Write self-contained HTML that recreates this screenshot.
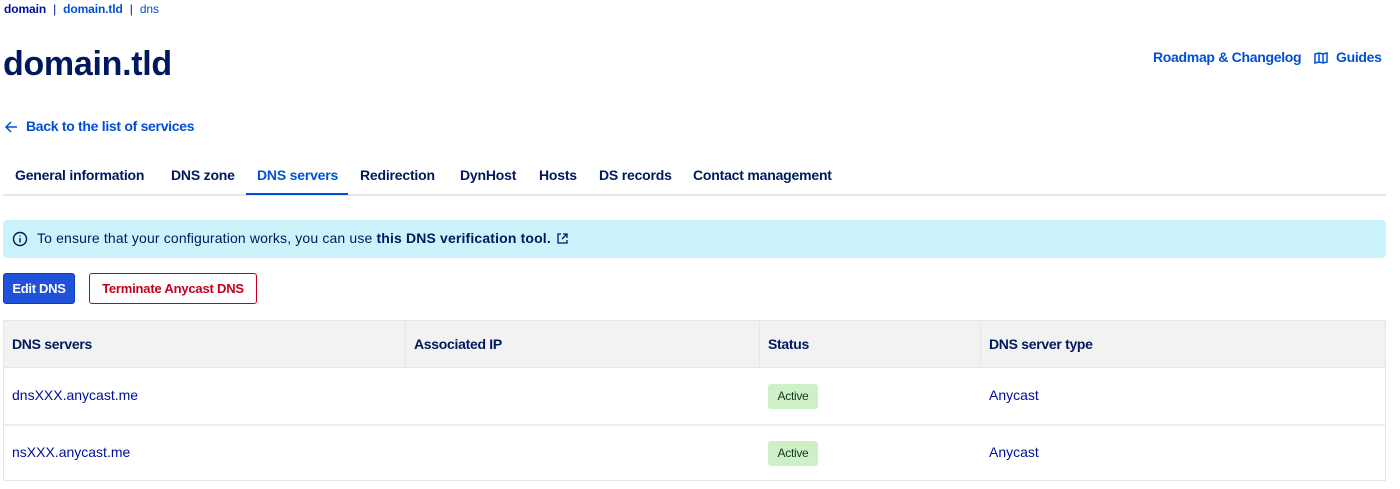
<!DOCTYPE html>
<html><head><meta charset="utf-8"><style>
*{margin:0;padding:0;box-sizing:border-box}
body{width:1400px;height:489px;background:#fff;font-family:"Liberation Sans",sans-serif;color:#000e9c;position:relative;overflow:hidden}
.a{position:absolute;white-space:nowrap}
.bc{top:2px;left:4px;font-size:12px;color:#0050d7;font-weight:bold;letter-spacing:-0.1px}
.bc span{color:#000e9c;font-weight:normal;margin:0 7px}
h1{position:absolute;left:3px;top:45px;font-size:34px;font-weight:bold;color:#00185e;letter-spacing:-0.3px}
.lk{color:#0050d7;font-weight:bold;font-size:14px;letter-spacing:-0.3px}
.tabs{position:absolute;left:3px;top:160px;width:1383px;height:36px;border-bottom:2px solid #e6e6e6}
.tab{position:absolute;top:7px;font-size:14px;font-weight:bold;color:#00185e;letter-spacing:-0.2px}
.info{position:absolute;left:3px;top:220px;width:1383px;height:38px;background:#ccf3fb;border-radius:4px;font-size:14px;color:#00185e;letter-spacing:0.15px}
.btn1{position:absolute;left:3px;top:273px;width:72px;height:31px;background:#1f52d8;border:1px solid #0a3fc4;border-radius:3px;color:#fff;font-weight:bold;font-size:13px;line-height:29px;text-align:center;letter-spacing:-0.3px}
.btn2{position:absolute;left:89px;top:273px;width:168px;height:31px;border:1px solid #c4001f;border-radius:3px;color:#c4001f;font-weight:bold;font-size:13px;line-height:29px;text-align:center;letter-spacing:-0.2px}
.tbl{position:absolute;left:3px;top:320px;width:1383px;height:161px;border:1px solid #e6e6e6}
.hd{position:absolute;left:0;top:0;width:100%;height:47px;background:#f2f2f2;border-bottom:1px solid #e6e6e6}
.vl{position:absolute;top:0;height:47px;width:1px;background:#e6e6e6}
.th{position:absolute;top:15px;font-size:14px;font-weight:bold;color:#00185e;letter-spacing:-0.3px}
.td{position:absolute;font-size:14px;color:#000e9c;letter-spacing:0}
.rl{position:absolute;left:0;width:100%;height:2px;background:#eee}
.badge{position:absolute;left:764px;width:50px;height:25px;background:#cdf0c6;border-radius:3px;font-size:12px;color:#0d3a1c;text-align:center;line-height:25px;letter-spacing:-0.3px}
</style></head><body>
<div class="a bc"><b style="color:#000e9c">domain</b><span>|</span>domain.tld<span>|</span><b style="font-weight:normal;color:#0050d7">dns</b></div>
<h1>domain.tld</h1>
<div class="a lk" style="left:1153px;top:49px">Roadmap &amp; Changelog</div>
<svg class="a" style="left:1314px;top:52px" width="14" height="12" viewBox="0 0 14 12" fill="none" stroke="#0050d7" stroke-width="1.5"><path d="M1 2l4-1 4 1 4-1v9l-4 1-4-1-4 1z M5 1v9 M9 2v9"/></svg>
<div class="a lk" style="left:1336px;top:49px">Guides</div>
<svg class="a" style="left:4px;top:120px" width="14" height="14" viewBox="0 0 14 14" fill="none" stroke="#0050d7" stroke-width="1.5"><path d="M13 7H2M7 2L2 7l5 5"/></svg>
<div class="a lk" style="left:26px;top:118px">Back to the list of services</div>
<div class="tabs">
<div class="tab" style="left:12px">General information</div>
<div class="tab" style="left:168px">DNS zone</div>
<div class="tab" style="left:254px;color:#0050d7">DNS servers</div>
<div style="position:absolute;left:243px;top:33px;width:102px;height:2px;background:#0050d7"></div>
<div class="tab" style="left:357px">Redirection</div>
<div class="tab" style="left:457px">DynHost</div>
<div class="tab" style="left:536px">Hosts</div>
<div class="tab" style="left:596px">DS records</div>
<div class="tab" style="left:690px">Contact management</div>
</div>
<div class="info">
<svg class="a" style="left:9px;top:11px" width="16" height="16" viewBox="0 0 16 16" fill="none" stroke="#00185e" stroke-width="1.4"><circle cx="8" cy="8" r="6.5"/><path d="M8 7v4.5M8 4.5v1"/></svg>
<div class="a" style="left:34px;top:10px">To ensure that your configuration works, you can use <b>this DNS verification tool.</b></div>
<svg class="a" style="left:553px;top:12px" width="13" height="13" viewBox="0 0 13 13" fill="none" stroke="#00185e" stroke-width="1.3"><path d="M5 2H2v9h9V8M7 2h4v4M11 2L6 7"/></svg>
</div>
<div class="btn1">Edit DNS</div>
<div class="btn2">Terminate Anycast DNS</div>
<div class="tbl">
<div class="hd"></div>
<div class="vl" style="left:401px"></div><div class="vl" style="left:755px"></div><div class="vl" style="left:976px"></div>
<div class="th" style="left:8px">DNS servers</div>
<div class="th" style="left:410px">Associated IP</div>
<div class="th" style="left:764px">Status</div>
<div class="th" style="left:985px">DNS server type</div>
<div class="td" style="left:8px;top:66px">dnsXXX.anycast.me</div>
<div class="badge" style="top:63px">Active</div>
<div class="td" style="left:985px;top:66px">Anycast</div>
<div class="rl" style="top:103px"></div>
<div class="td" style="left:8px;top:123px">nsXXX.anycast.me</div>
<div class="badge" style="top:120px">Active</div>
<div class="td" style="left:985px;top:123px">Anycast</div>
</div>
</body></html>
